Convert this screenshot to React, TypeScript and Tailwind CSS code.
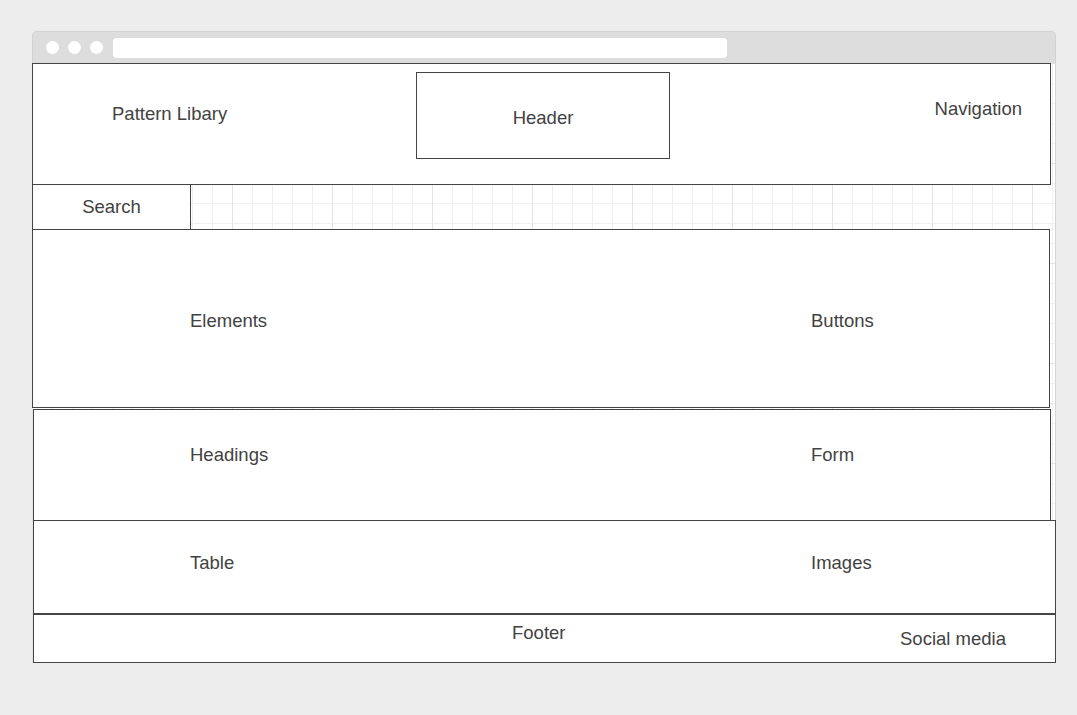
import React from "react";

export default function App() {
  return (
    <div className="w-[1077px] h-[715px] bg-[#ededed] pt-[31px] pl-[32px] font-['Liberation_Sans',Arial,sans-serif] text-[18.5px] leading-[20px] text-[#424242]">
      <div className="w-[1024px]">
        {/* title bar */}
        <div className="h-[32px] rounded-t-[5px] bg-[#dddddd] border border-b-0 border-[#d2d2d2] flex items-center pl-[13px] gap-[9px]">
          <div className="w-[13px] h-[13px] rounded-full bg-white" />
          <div className="w-[13px] h-[13px] rounded-full bg-white" />
          <div className="w-[13px] h-[13px] rounded-full bg-white" />
          <div className="ml-[1px] w-[614px] h-[20px] rounded-[4px] bg-white" />
        </div>
        {/* body */}
        <div className="bg-white border-r border-[#d6d6d6] bg-[linear-gradient(to_right,#e4e4e4_1px,transparent_1px),linear-gradient(to_bottom,#e4e4e4_1px,transparent_1px),linear-gradient(to_right,#efefef_1px,transparent_1px),linear-gradient(to_bottom,#efefef_1px,transparent_1px)] bg-size-[100px_100px,100px_100px,20px_20px,20px_20px]">
          {/* header */}
          <div className="w-[1019px] h-[122px] border border-[#444] bg-white flex items-start">
            <div className="w-[383px] pl-[79px] pt-[40px]">Pattern Libary</div>
            <div className="mt-[8px] w-[254px] h-[87px] border border-[#444] flex items-center justify-center pt-[4px]">
              Header
            </div>
            <div className="flex-1 flex justify-end pr-[28px] pt-[35px]">Navigation</div>
          </div>
          {/* search */}
          <div className="-mt-px w-[159px] h-[46px] border border-[#444] bg-white flex items-center justify-center">
            Search
          </div>
          {/* elements */}
          <div className="-mt-px w-[1018px] h-[179px] border border-[#444] bg-white flex items-center pt-[5px]">
            <div className="w-[778px] pl-[157px]">Elements</div>
            <div>Buttons</div>
          </div>
          {/* headings */}
          <div className="mt-px ml-px w-[1018px] h-[112px] border border-[#444] bg-white flex items-start pt-[35px]">
            <div className="w-[777px] pl-[156px]">Headings</div>
            <div>Form</div>
          </div>
          {/* table */}
          <div className="-mt-px ml-px w-[1023px] h-[94px] border border-[#444] bg-white flex items-start pt-[32px]">
            <div className="w-[777px] pl-[156px]">Table</div>
            <div>Images</div>
          </div>
          {/* footer */}
          <div className="-mt-px ml-px w-[1023px] h-[50px] border border-t-2 border-[#444] bg-white flex items-start pt-[8px]">
            <div className="w-[866px] pl-[478px]">Footer</div>
            <div className="mt-[6px]">Social media</div>
          </div>
        </div>
      </div>
    </div>
  );
}
